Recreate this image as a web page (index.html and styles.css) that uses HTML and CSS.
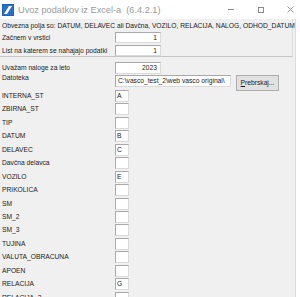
FILE: index.html
```html
<!DOCTYPE html>
<html lang="sl">
<head>
    <meta charset="UTF-8">
    <title>Uvoz podatkov iz Excel-a</title>
    <link rel="stylesheet" href="styles.css">
</head>
<body>
    <div class="window">
        <div class="titlebar">
            <svg class="app-icon" width="12" height="12" viewBox="0 0 12 12">
                <rect x="0" y="0" width="12" height="12" fill="#2a6fc9"/>
                <path d="M2 10 L7 2 L10 2 L5 10 Z" fill="#ffffff"/>
                <rect x="0" y="0" width="12" height="12" fill="none" stroke="#1b57a8" stroke-width="1"/>
            </svg>
            <span class="title-text">Uvoz podatkov iz Excel-a&nbsp; (6.4.2.1)</span>
            <div class="controls">
                <span class="ctl ctl-min"></span>
                <span class="ctl ctl-max"></span>
                <svg class="ctl-close" width="7" height="7" viewBox="0 0 7 7">
                    <path d="M0.5 0.5 L6.5 6.5 M6.5 0.5 L0.5 6.5" stroke="#8a8a8a" stroke-width="0.9" fill="none"/>
                </svg>
            </div>
        </div>

        <div class="client">
            <div class="top-panel">
                <p class="note">Obvezna polja so: DATUM, DELAVEC ali Davčna, VOZILO, RELACIJA, NALOG, ODHOD_DATUM</p>
                <div class="row">
                    <span class="lbl">Začnem v vrstici</span>
                    <span class="box box-num">1</span>
                </div>
                <div class="row">
                    <span class="lbl">List na katerem se nahajajo podatki</span>
                    <span class="box box-num">1</span>
                </div>
            </div>

            <div class="fields">
                <div class="row">
                    <span class="lbl">Uvažam naloge za leto</span>
                    <span class="box box-num">2023</span>
                </div>
                <div class="row row-file">
                    <span class="lbl">Datoteka</span>
                    <span class="box box-file">C:\vasco_test_2\web vasco original\</span>
                    <span class="btn"><u>P</u>rebrskaj...</span>
                </div>

                <div class="map-list">
                    <div class="map-row"><span class="lbl">INTERNA_ST</span><span class="box box-col">A</span></div>
                    <div class="map-row"><span class="lbl">ZBIRNA_ST</span><span class="box box-col"></span></div>
                    <div class="map-row"><span class="lbl">TIP</span><span class="box box-col"></span></div>
                    <div class="map-row"><span class="lbl">DATUM</span><span class="box box-col">B</span></div>
                    <div class="map-row"><span class="lbl">DELAVEC</span><span class="box box-col">C</span></div>
                    <div class="map-row"><span class="lbl">Davčna delavca</span><span class="box box-col"></span></div>
                    <div class="map-row"><span class="lbl">VOZILO</span><span class="box box-col">E</span></div>
                    <div class="map-row"><span class="lbl">PRIKOLICA</span><span class="box box-col"></span></div>
                    <div class="map-row"><span class="lbl">SM</span><span class="box box-col"></span></div>
                    <div class="map-row"><span class="lbl">SM_2</span><span class="box box-col"></span></div>
                    <div class="map-row"><span class="lbl">SM_3</span><span class="box box-col"></span></div>
                    <div class="map-row"><span class="lbl">TUJINA</span><span class="box box-col"></span></div>
                    <div class="map-row"><span class="lbl">VALUTA_OBRACUNA</span><span class="box box-col"></span></div>
                    <div class="map-row"><span class="lbl">APOEN</span><span class="box box-col"></span></div>
                    <div class="map-row"><span class="lbl">RELACIJA</span><span class="box box-col">G</span></div>
                    <div class="map-row"><span class="lbl">RELACIJA_2</span><span class="box box-col"></span></div>
                </div>
            </div>
        </div>
    </div>
</body>
</html>
```

FILE: styles.css
```css
body, body *, body *::before, body *::after {
    box-sizing: border-box;
    padding: 0;
    margin: 0;
}
:root {
    --form-bgc: #f0f0f0;
    --edit-border: #a9a9a9;
    --text-color: #1a1a1a;
    --row-pitch: 13.45px;
}
body {
    background-color: #ffffff;
    font-family: "Liberation Sans", Arial, sans-serif;
    font-size: 6.7px;
    color: var(--text-color);
    overflow: hidden;
    width: 300px;
    height: 297px;
}
.window {
    width: 300px;
    height: 297px;
    display: flex;
    flex-direction: column;
}

/* barra de titulo */
.titlebar {
    height: 19px;
    flex-shrink: 0;
    background-color: #ffffff;
    display: flex;
    align-items: center;
    padding-left: 2px;
}
.app-icon {
    display: block;
    margin-right: 4px;
}
.title-text {
    font-size: 9.2px;
    color: #9a9a9a;
    white-space: nowrap;
}
.controls {
    margin-left: auto;
    display: flex;
    align-items: center;
    height: 100%;
}
.ctl, .ctl-close {
    display: block;
}
.ctl-min {
    width: 6px;
    height: 1px;
    background-color: #8a8a8a;
    margin-right: 24px;
}
.ctl-max {
    width: 6px;
    height: 6px;
    border: 1px solid #8a8a8a;
    margin-right: 23px;
}
.ctl-close {
    margin-right: 6px;
}

/* area del formulario */
.client {
    flex: 1;
    width: 296px;
    background-color: var(--form-bgc);
    border-right: 1px solid #dcdcdc;
}
.top-panel {
    width: 293px;
    padding: 2px 0 1px 2px;
    border-bottom: 1px solid #c6c6c6;
    border-right: 1px solid #dedede;
    height: 38px;
}
.note {
    line-height: 10px;
    white-space: nowrap;
}
.row {
    display: flex;
    align-items: center;
    height: 13px;
}
.lbl {
    width: 113px;
    flex-shrink: 0;
    white-space: nowrap;
}
.box {
    display: block;
    background-color: #ffffff;
    border: 1px solid var(--edit-border);
    border-right-color: #dadada;
    border-bottom-color: #dadada;
    height: 11px;
    line-height: 9px;
    padding: 0 3px 0 2px;
    white-space: nowrap;
    overflow: hidden;
}
.box-num {
    width: 46px;
    text-align: right;
}
.fields {
    padding: 4px 0 0 2px;
}
.fields .row .box {
    height: 12px;
    line-height: 10px;
}
.row-file {
    height: 14px;
    align-items: flex-start;
}
.box-file {
    width: 116px;
    margin-top: 1px;
}
.btn {
    display: block;
    margin-left: 5px;
    margin-top: 1px;
    width: 43px;
    height: 16px;
    line-height: 14px;
    text-align: center;
    background-color: #e1e1e1;
    border: 1px solid #adadad;
}
.btn u {
    text-decoration: underline;
}
.map-list {
    margin-top: 2px;
}
.map-row {
    display: flex;
    align-items: flex-start;
    height: var(--row-pitch);
}
.map-row .lbl {
    line-height: 12px;
}
.box-col {
    width: 14px;
    height: 12px;
    line-height: 10px;
    padding: 0 1px;
}
```
